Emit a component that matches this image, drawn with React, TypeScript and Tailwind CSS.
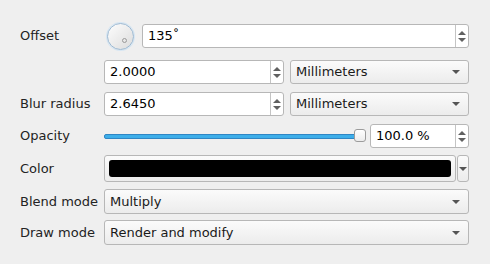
import React from "react";

const font = { fontFamily: '"DejaVu Sans", sans-serif' };

function Spin({ className = "" }: { className?: string }) {
  return (
    <div
      className={`flex w-[13px] flex-col items-center justify-center gap-[3px] border-l border-[#c4c4c4] ${className}`}
    >
      <div className="h-0 w-0 border-x-[4px] border-b-[4px] border-x-transparent border-b-[#606060]" />
      <div className="h-0 w-0 border-x-[4px] border-t-[4px] border-x-transparent border-t-[#606060]" />
    </div>
  );
}

function SpinBox({ value, className = "" }: { value: string; className?: string }) {
  return (
    <div
      className={`flex h-full rounded-[3px] border border-[#b7b7b7] bg-white ${className}`}
    >
      <div className="flex flex-1 items-center pl-[5px] text-[13px] text-black">
        {value}
      </div>
      <Spin />
    </div>
  );
}

function Arrow() {
  return (
    <div className="h-0 w-0 border-x-[4px] border-t-[4px] border-x-transparent border-t-[#555]" />
  );
}

function Combo({ value, className = "" }: { value: string; className?: string }) {
  return (
    <div
      className={`flex h-full items-center justify-between rounded-[3px] border border-[#b7b7b7] bg-gradient-to-b from-[#fbfbfb] to-[#ececec] pl-[5px] pr-[8px] text-[13px] text-[#1a1a1a] ${className}`}
    >
      <span>{value}</span>
      <Arrow />
    </div>
  );
}

function Label({ text }: { text: string }) {
  return (
    <div className="flex w-[84px] shrink-0 items-center text-[13px] text-[#232323]">
      {text}
    </div>
  );
}

export default function App() {
  return (
    <div
      className="flex h-[264px] w-[490px] flex-col bg-[#efefef] pl-[20px] pr-[21px] pt-[24px]"
      style={font}
    >
      <div className="flex h-[24px]">
        <Label text="Offset" />
        <div className="flex w-[38px] shrink-0 items-center pl-[3px]">
          <div className="relative h-[27px] w-[27px] rounded-full border border-[#9bb9d3] bg-gradient-to-br from-[#fdfdfd] to-[#dcdcdc] shadow-[0_0_0_1px_#d6e6f3]">
            <div className="absolute left-[14px] top-[14px] h-[5px] w-[5px] rounded-full border border-[#9a9a9a]" />
          </div>
        </div>
        <SpinBox value="135˚" className="flex-1" />
      </div>

      <div className="mt-[12px] flex h-[24px]">
        <div className="w-[84px] shrink-0" />
        <SpinBox value="2.0000" className="w-[180px]" />
        <Combo value="Millimeters" className="ml-[6px] flex-1" />
      </div>

      <div className="mt-[8px] flex h-[24px]">
        <Label text="Blur radius" />
        <SpinBox value="2.6450" className="w-[180px]" />
        <Combo value="Millimeters" className="ml-[6px] flex-1" />
      </div>

      <div className="mt-[8px] flex h-[24px]">
        <Label text="Opacity" />
        <div className="relative flex flex-1 items-center">
          <div className="h-[5px] flex-1 rounded-[2px] border border-[#2f86c4] bg-[#3daee9]" />
          <div className="absolute right-[0px] top-[5px] h-[13px] w-[12px] rounded-[3px] border border-[#9c9c9c] bg-gradient-to-b from-white to-[#ececec]" />
        </div>
        <SpinBox value="100.0 %" className="ml-[4px] w-[99px]" />
      </div>

      <div className="mt-[7px] flex h-[27px]">
        <Label text="Color" />
        <div className="flex flex-1 items-center rounded-[3px] border border-[#b7b7b7] bg-gradient-to-b from-[#fbfbfb] to-[#ececec] px-[4px]">
          <div className="h-[17px] flex-1 rounded-[3px] bg-black" />
        </div>
        <div className="ml-[1px] flex w-[12px] items-center justify-center rounded-[3px] border border-[#b7b7b7] bg-gradient-to-b from-[#fbfbfb] to-[#ececec]">
          <Arrow />
        </div>
      </div>

      <div className="mt-[7px] flex h-[25px]">
        <Label text="Blend mode" />
        <Combo value="Multiply" className="flex-1" />
      </div>

      <div className="mt-[6px] flex h-[25px]">
        <Label text="Draw mode" />
        <Combo value="Render and modify" className="flex-1" />
      </div>
    </div>
  );
}
